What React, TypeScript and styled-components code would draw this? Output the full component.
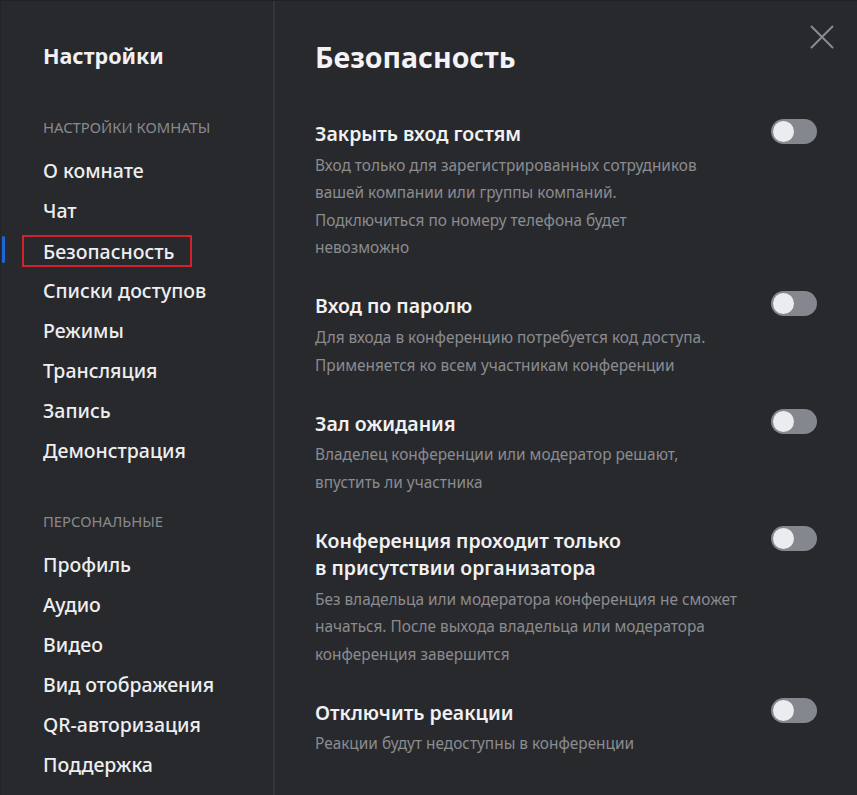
import React from "react";
import styled, { createGlobalStyle } from "styled-components";

const GlobalStyle = createGlobalStyle`
  html, body {
    margin: 0;
    padding: 0;
    background: #28292d;
  }
  body {
    font-family: "Noto Sans", "Open Sans", sans-serif;
    -webkit-font-smoothing: antialiased;
  }
`;

const Frame = styled.div`
  display: flex;
  width: 857px;
  height: 795px;
  box-sizing: border-box;
  background: #28292d;
  border-top: 1px solid #202124;
  border-left: 1px solid #222326;
  overflow: hidden;
`;

const Sidebar = styled.nav`
  width: 274px;
  flex: none;
  box-sizing: border-box;
  border-right: 2px solid #343539;
  padding: 41px 0 0 42px;
  display: flex;
  flex-direction: column;
`;

const SideTitle = styled.h2`
  margin: 0;
  font-size: 21.5px;
  line-height: 28px;
  font-weight: 700;
  color: #f1f1f3;
`;

const SectionLabel = styled.div<{ $top: number }>`
  margin-top: ${(p) => p.$top}px;
  margin-bottom: 13px;
  font-size: 14.8px;
  line-height: 20px;
  color: #88898d;
`;

const NavList = styled.ul`
  list-style: none;
  margin: 0;
  padding: 0;
  display: flex;
  flex-direction: column;
`;

const NavItem = styled.li<{ $active?: boolean }>`
  position: relative;
  height: 40px;
  display: flex;
  align-items: center;
  font-size: 19.5px;
  font-weight: 500;
  color: #eeeef0;

  ${(p) =>
    p.$active &&
    `
    &::before {
      content: "";
      position: absolute;
      left: -41px;
      top: 6px;
      width: 3px;
      height: 27px;
      border-radius: 2px;
      background: #1a67dc;
    }
  `}
`;

const ActiveBox = styled.span`
  display: inline-flex;
  align-items: center;
  height: 28px;
  margin-left: -21px;
  margin-top: 2px;
  padding: 0 16px 0 19px;
  border: 2px solid #d3222c;
`;

const Main = styled.main`
  position: relative;
  flex: 1;
  padding: 36px 40px 0 40px;
  display: flex;
  flex-direction: column;
`;

const Heading = styled.h1`
  margin: 0 0 43px 0;
  font-size: 28.5px;
  line-height: 40px;
  font-weight: 700;
  color: #f3f3f5;
`;

const CloseButton = styled.button`
  position: absolute;
  top: 24px;
  right: 23px;
  width: 24px;
  height: 24px;
  padding: 0;
  border: none;
  background: transparent;
  display: flex;
  align-items: center;
  justify-content: center;
  cursor: pointer;
`;

const Options = styled.div`
  display: flex;
  flex-direction: column;
  gap: 30.5px;
`;

const Option = styled.div`
  display: flex;
  align-items: flex-start;
  justify-content: space-between;
  gap: 20px;
`;

const OptionText = styled.div`
  display: flex;
  flex-direction: column;
`;

const OptionTitle = styled.div`
  font-size: 19.5px;
  line-height: 27px;
  font-weight: 600;
  color: #f1f1f3;
`;

const OptionDesc = styled.div`
  margin-top: 4.75px;
  font-size: 15.4px;
  line-height: 27.5px;
  color: #8b8c90;
`;

const Track = styled.div`
  flex: none;
  width: 46px;
  height: 25px;
  margin-top: -1px;
  border-radius: 13px;
  background: #84878e;
  box-sizing: border-box;
  padding: 2px;
  display: flex;
  align-items: center;
`;

const Knob = styled.div`
  width: 21px;
  height: 21px;
  border-radius: 50%;
  background: #ebecef;
`;

const roomItems = [
  "О комнате",
  "Чат",
  "Безопасность",
  "Списки доступов",
  "Режимы",
  "Трансляция",
  "Запись",
  "Демонстрация",
];

const personalItems = [
  "Профиль",
  "Аудио",
  "Видео",
  "Вид отображения",
  "QR-авторизация",
  "Поддержка",
];

const options = [
  {
    title: ["Закрыть вход гостям"],
    desc: [
      "Вход только для зарегистрированных сотрудников",
      "вашей компании или группы компаний.",
      "Подключиться по номеру телефона будет",
      "невозможно",
    ],
  },
  {
    title: ["Вход по паролю"],
    desc: [
      "Для входа в конференцию потребуется код доступа.",
      "Применяется ко всем участникам конференции",
    ],
  },
  {
    title: ["Зал ожидания"],
    desc: [
      "Владелец конференции или модератор решают,",
      "впустить ли участника",
    ],
  },
  {
    title: ["Конференция проходит только", "в присутствии организатора"],
    desc: [
      "Без владельца или модератора конференция не сможет",
      "начаться. После выхода владельца или модератора",
      "конференция завершится",
    ],
  },
  {
    title: ["Отключить реакции"],
    desc: ["Реакции будут недоступны в конференции"],
  },
];

const lines = (arr: string[]) =>
  arr.map((l, i) => (
    <React.Fragment key={i}>
      {l}
      {i < arr.length - 1 && <br />}
    </React.Fragment>
  ));

export default function App() {
  const active = "Безопасность";
  return (
    <>
      <GlobalStyle />
      <Frame>
        <Sidebar>
          <SideTitle>Настройки</SideTitle>
          <SectionLabel $top={47}>НАСТРОЙКИ КОМНАТЫ</SectionLabel>
          <NavList>
            {roomItems.map((it) => (
              <NavItem key={it} $active={it === active}>
                {it === active ? <ActiveBox>{it}</ActiveBox> : it}
              </NavItem>
            ))}
          </NavList>
          <SectionLabel $top={41}>ПЕРСОНАЛЬНЫЕ</SectionLabel>
          <NavList>
            {personalItems.map((it) => (
              <NavItem key={it}>{it}</NavItem>
            ))}
          </NavList>
        </Sidebar>
        <Main>
          <CloseButton aria-label="Закрыть">
            <svg width="24" height="24" viewBox="0 0 24 24">
              <path
                d="M1.5 1.5 L22.5 22.5 M22.5 1.5 L1.5 22.5"
                stroke="#8a8b90"
                strokeWidth="2"
                strokeLinecap="round"
                fill="none"
              />
            </svg>
          </CloseButton>
          <Heading>Безопасность</Heading>
          <Options>
            {options.map((o, i) => (
              <Option key={i}>
                <OptionText>
                  <OptionTitle>{lines(o.title)}</OptionTitle>
                  <OptionDesc>{lines(o.desc)}</OptionDesc>
                </OptionText>
                <Track>
                  <Knob />
                </Track>
              </Option>
            ))}
          </Options>
        </Main>
      </Frame>
    </>
  );
}
